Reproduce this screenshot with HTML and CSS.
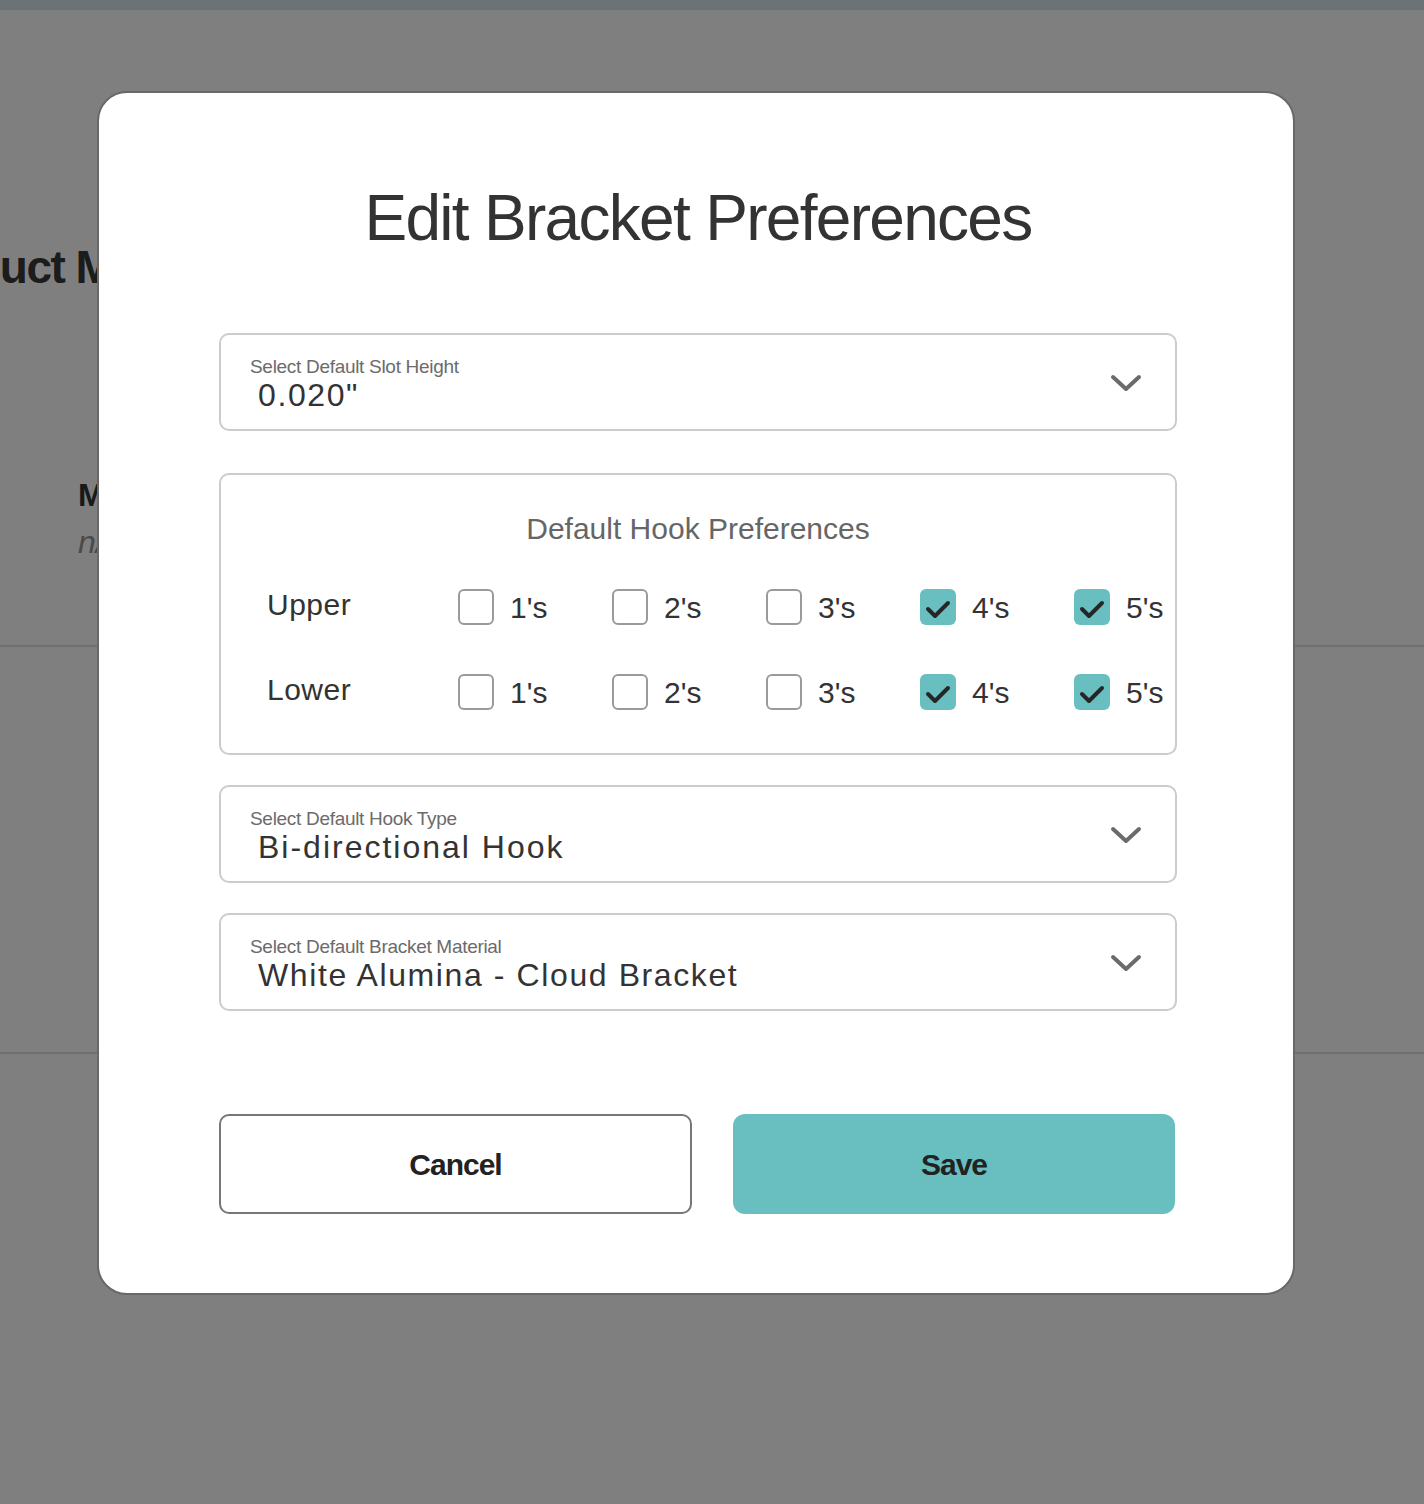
FILE: index.html
```html
<!DOCTYPE html>
<html lang="en">
<head>
<meta charset="utf-8">
<title>Edit Bracket Preferences</title>
<link rel="stylesheet" href="styles.css">
</head>
<body>
<div class="topbar"></div>
<main class="page">
  <h2 class="page-title">Product Management</h2>
  <div class="info">
    <div class="info-label">Material</div>
    <div class="info-value">n/a</div>
  </div>
  <div class="rule rule-1"></div>
  <div class="rule rule-2"></div>
</main>

<div class="overlay">
  <div class="modal" role="dialog" aria-labelledby="modal-title">
    <h1 class="modal-title" id="modal-title">Edit Bracket Preferences</h1>

    <div class="select">
      <div class="select-text">
        <div class="select-label">Select Default Slot Height</div>
        <div class="select-value">0.020"</div>
      </div>
      <svg class="chevron" width="32" height="20" viewBox="0 0 32 20"><polyline points="3,4 16,16 29,4" fill="none" stroke="#6b6b6b" stroke-width="4" stroke-linecap="round" stroke-linejoin="round"/></svg>
    </div>

    <div class="hooks">
      <div class="hooks-title">Default Hook Preferences</div>
      <div class="hook-row">
        <div class="hook-label">Upper</div>
        <label class="opt"><span class="box"></span>1's</label>
        <label class="opt"><span class="box"></span>2's</label>
        <label class="opt"><span class="box"></span>3's</label>
        <label class="opt"><span class="box checked"><svg width="36" height="36" viewBox="0 0 36 36"><polyline points="8,20 15,27 28,14" fill="none" stroke="#262626" stroke-width="4" stroke-linecap="round" stroke-linejoin="round"/></svg></span>4's</label>
        <label class="opt"><span class="box checked"><svg width="36" height="36" viewBox="0 0 36 36"><polyline points="8,20 15,27 28,14" fill="none" stroke="#262626" stroke-width="4" stroke-linecap="round" stroke-linejoin="round"/></svg></span>5's</label>
      </div>
      <div class="hook-row">
        <div class="hook-label">Lower</div>
        <label class="opt"><span class="box"></span>1's</label>
        <label class="opt"><span class="box"></span>2's</label>
        <label class="opt"><span class="box"></span>3's</label>
        <label class="opt"><span class="box checked"><svg width="36" height="36" viewBox="0 0 36 36"><polyline points="8,20 15,27 28,14" fill="none" stroke="#262626" stroke-width="4" stroke-linecap="round" stroke-linejoin="round"/></svg></span>4's</label>
        <label class="opt"><span class="box checked"><svg width="36" height="36" viewBox="0 0 36 36"><polyline points="8,20 15,27 28,14" fill="none" stroke="#262626" stroke-width="4" stroke-linecap="round" stroke-linejoin="round"/></svg></span>5's</label>
      </div>
    </div>

    <div class="select select-gap">
      <div class="select-text">
        <div class="select-label">Select Default Hook Type</div>
        <div class="select-value value-wide">Bi-directional Hook</div>
      </div>
      <svg class="chevron" width="32" height="20" viewBox="0 0 32 20"><polyline points="3,4 16,16 29,4" fill="none" stroke="#6b6b6b" stroke-width="4" stroke-linecap="round" stroke-linejoin="round"/></svg>
    </div>

    <div class="select select-gap">
      <div class="select-text">
        <div class="select-label">Select Default Bracket Material</div>
        <div class="select-value">White Alumina - Cloud Bracket</div>
      </div>
      <svg class="chevron" width="32" height="20" viewBox="0 0 32 20"><polyline points="3,4 16,16 29,4" fill="none" stroke="#6b6b6b" stroke-width="4" stroke-linecap="round" stroke-linejoin="round"/></svg>
    </div>

    <div class="actions">
      <button class="btn btn-cancel" type="button">Cancel</button>
      <button class="btn btn-save" type="button">Save</button>
    </div>
  </div>
</div>
</body>
</html>
```
FILE: styles.css
```css
* { box-sizing: border-box; }

html, body {
  margin: 0;
  padding: 0;
  background: #ffffff;
  font-family: "Liberation Sans", Arial, sans-serif;
  color: #333333;
}

body {
  width: 1424px;
  height: 1504px;
  overflow: hidden;
}

/* ---------- background page ---------- */
.topbar {
  height: 10px;
  background: #d6e6ec;
}

.page {
  padding: 229px 0 0 78px;
}

.page-title {
  margin: 0 0 0 -177px;
  font-size: 46px;
  line-height: 56px;
  font-weight: 700;
  letter-spacing: -1.5px;
  color: #383838;
  white-space: nowrap;
}

.info {
  margin-top: 180px;
}

.info-label {
  font-size: 32px;
  line-height: 40px;
  font-weight: 700;
  color: #333333;
}

.info-value {
  margin-top: 7px;
  font-size: 32px;
  line-height: 40px;
  font-style: italic;
  color: #949494;
}

.rule {
  height: 2px;
  background: #e0e0e0;
  margin-left: -78px;
}

.rule-1 { margin-top: 83px; }
.rule-2 { margin-top: 405px; }

/* ---------- overlay + modal ---------- */
.overlay {
  position: fixed;
  inset: 0;
  background: rgba(0, 0, 0, 0.5);
}

.modal {
  position: absolute;
  left: 97px;
  top: 91px;
  width: 1198px;
  background: #ffffff;
  border: 2px solid #686868;
  border-radius: 30px;
  padding: 89px 116px 79px 120px;
}

.modal-title {
  margin: 0 0 79px;
  text-align: center;
  font-size: 64px;
  line-height: 72px;
  font-weight: 400;
  letter-spacing: -1.7px;
  color: #333333;
}

/* select fields */
.select {
  display: flex;
  align-items: center;
  justify-content: space-between;
  border: 2px solid #cccccc;
  border-radius: 10px;
  padding: 20px 33px 18px 29px;
}

.select-gap { margin-top: 30px; }

.select-label {
  font-size: 19px;
  line-height: 24px;
  letter-spacing: -0.3px;
  color: #6b6b6b;
}

.select-value {
  margin-left: 8px;
  font-size: 32px;
  line-height: 32px;
  letter-spacing: 1.6px;
  color: #333333;
}

.value-wide { letter-spacing: 2px; }

.chevron {
  flex: none;
  display: block;
}

/* hook preferences */
.hooks {
  margin-top: 42px;
  border: 2px solid #cccccc;
  border-radius: 10px;
  padding: 36px 0 45px 46px;
}

.hooks-title {
  margin-left: -46px;
  text-align: center;
  font-size: 30px;
  line-height: 36px;
  color: #666666;
}

.hook-row {
  display: grid;
  grid-template-columns: 191px repeat(4, 154px) auto;
  align-items: center;
  height: 36px;
  margin-top: 49px;
}

.hooks-title + .hook-row { margin-top: 40px; }

.hook-label {
  font-size: 30px;
  line-height: 36px;
  letter-spacing: 0.5px;
  color: #333333;
  margin-top: -3px;
}

.opt {
  display: flex;
  align-items: center;
  font-size: 30px;
  line-height: 36px;
  color: #333333;
  margin-top: 3px;
}

.box {
  flex: none;
  width: 36px;
  height: 36px;
  margin: -3px 16px 0 0;
  border: 2px solid #9a9a9a;
  border-radius: 6px;
  background: #ffffff;
}

.box.checked {
  border: none;
  background: #69bfc0;
}

.box svg { display: block; }

/* buttons */
.actions {
  display: flex;
  gap: 41px;
  margin-top: 103px;
}

.btn {
  height: 100px;
  padding-top: 3px;
  font-family: "Liberation Sans", Arial, sans-serif;
  font-size: 30px;
  font-weight: 700;
  letter-spacing: -1px;
  color: #222222;
  cursor: pointer;
}

.btn-cancel {
  width: 473px;
  background: #ffffff;
  border: 2px solid #777777;
  border-radius: 10px;
}

.btn-save {
  width: 442px;
  background: #69bfc0;
  border: none;
  border-radius: 12px;
}
```
